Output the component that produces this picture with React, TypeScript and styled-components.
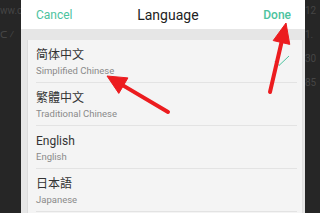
import styled, {createGlobalStyle} from 'styled-components'

const GlobalStyle = createGlobalStyle`
  html, body {
    margin: 0;
    padding: 0;
    background: #262626;
    font-family: Roboto, "Noto Sans CJK SC", "Noto Sans", sans-serif;
  }
`

const ACCENT = '#4cc39e'
const ARROW = '#ec1c1f'

export const Page = styled.div`
  position: relative;
  display: flex;
  width: 320px;
  height: 213px;
  overflow: hidden;
  background: #262626;
`
export const SideStrip = styled.div<{$w: number}>`
  width: ${p => p.$w}px;
  flex: none;
  display: flex;
  flex-direction: column;
  gap: 12px;
  padding-top: 5px;
  overflow: hidden;
  font-size: 10px;
  line-height: 12px;
  color: #454545;
  white-space: nowrap;
`
export const Sheet = styled.div`
  flex: 1;
  display: flex;
  flex-direction: column;
  min-width: 0;
`
export const Header = styled.div`
  height: 29px;
  flex: none;
  display: flex;
  align-items: center;
  justify-content: space-between;
  padding: 0 14px 0 15px;
  background: #ffffff;
`
export const HeaderButton = styled.span<{$bold?: boolean}>`
  font-size: 12px;
  font-weight: ${p => (p.$bold ? 500 : 400)};
  color: ${ACCENT};
`
export const HeaderTitle = styled.span`
  font-size: 14px;
  color: #222222;
`
export const Body = styled.div`
  flex: 1;
  padding: 11px 2px 0 6px;
  background: #e6e6e6;
`
export const Card = styled.div`
  height: 100%;
  background: #f4f4f4;
  border-left: 1px solid #dcdcdc;
  border-right: 1px solid #e0e0e0;
`
export const Row = styled.div`
  height: 43px;
  box-sizing: border-box;
  display: flex;
  align-items: flex-start;
  margin: 0 5px 0 8px;
  padding: 8px 7px 0 0;
  border-bottom: 1px solid #e3e3e3;
`
export const RowText = styled.div`
  flex: 1;
  display: flex;
  flex-direction: column;
  gap: 3px;
`
export const RowTitle = styled.div`
  font-size: 12px;
  line-height: 14px;
  color: #333333;
`
export const RowSub = styled.div`
  font-size: 9.5px;
  line-height: 12px;
  color: #8a8a8a;
`
export const CheckMark = styled.svg`
  margin-top: 7px;
  flex: none;
`
export const Overlay = styled.svg`
  position: absolute;
  left: 0;
  top: 0;
  pointer-events: none;
`

const languages = [
  {name: '简体中文', sub: 'Simplified Chinese', selected: true},
  {name: '繁體中文', sub: 'Traditional Chinese'},
  {name: 'English', sub: 'English'},
  {name: '日本語', sub: 'Japanese'},
]

function Arrow({tail, tip, head = 19, half = 9}: {tail: [number, number]; tip: [number, number]; head?: number; half?: number}) {
  const dx = tip[0] - tail[0]
  const dy = tip[1] - tail[1]
  const len = Math.hypot(dx, dy)
  const ux = dx / len
  const uy = dy / len
  const bx = tip[0] - ux * head
  const by = tip[1] - uy * head
  const px = -uy
  const py = ux
  const pts = `${tip[0]},${tip[1]} ${bx + px * half},${by + py * half} ${bx - px * half},${by - py * half}`
  return (
    <g fill={ARROW} stroke={ARROW}>
      <line x1={tail[0]} y1={tail[1]} x2={bx + ux * 2} y2={by + uy * 2} strokeWidth={4} strokeLinecap="round" />
      <polygon points={pts} strokeWidth={1} strokeLinejoin="round" />
    </g>
  )
}

export default function App() {
  return (
    <>
      <GlobalStyle />
      <Page>
        <SideStrip $w={21}>
          <span>ww.c</span>
          <span>ᑕ ⁄</span>
        </SideStrip>
        <Sheet>
          <Header>
            <HeaderButton>Cancel</HeaderButton>
            <HeaderTitle>Language</HeaderTitle>
            <HeaderButton $bold>Done</HeaderButton>
          </Header>
          <Body>
            <Card>
              {languages.map(l => (
                <Row key={l.sub}>
                  <RowText>
                    <RowTitle>{l.name}</RowTitle>
                    <RowSub>{l.sub}</RowSub>
                  </RowText>
                  {l.selected && (
                    <CheckMark width="16" height="12" viewBox="0 0 16 12">
                      <path d="M1 6.5 L5 10.5 L15 1" fill="none" stroke={ACCENT} strokeWidth="1" />
                    </CheckMark>
                  )}
                </Row>
              ))}
            </Card>
          </Body>
        </Sheet>
        <SideStrip $w={15}>
          <span>12</span>
          <span>1.</span>
          <span>30</span>
          <span>85</span>
        </SideStrip>
        <Overlay width="320" height="213" viewBox="0 0 320 213">
          <Arrow tail={[168, 112]} tip={[107, 76]} />
          <Arrow tail={[270, 92]} tip={[286, 23]} head={20} half={8.5} />
        </Overlay>
      </Page>
    </>
  )
}
